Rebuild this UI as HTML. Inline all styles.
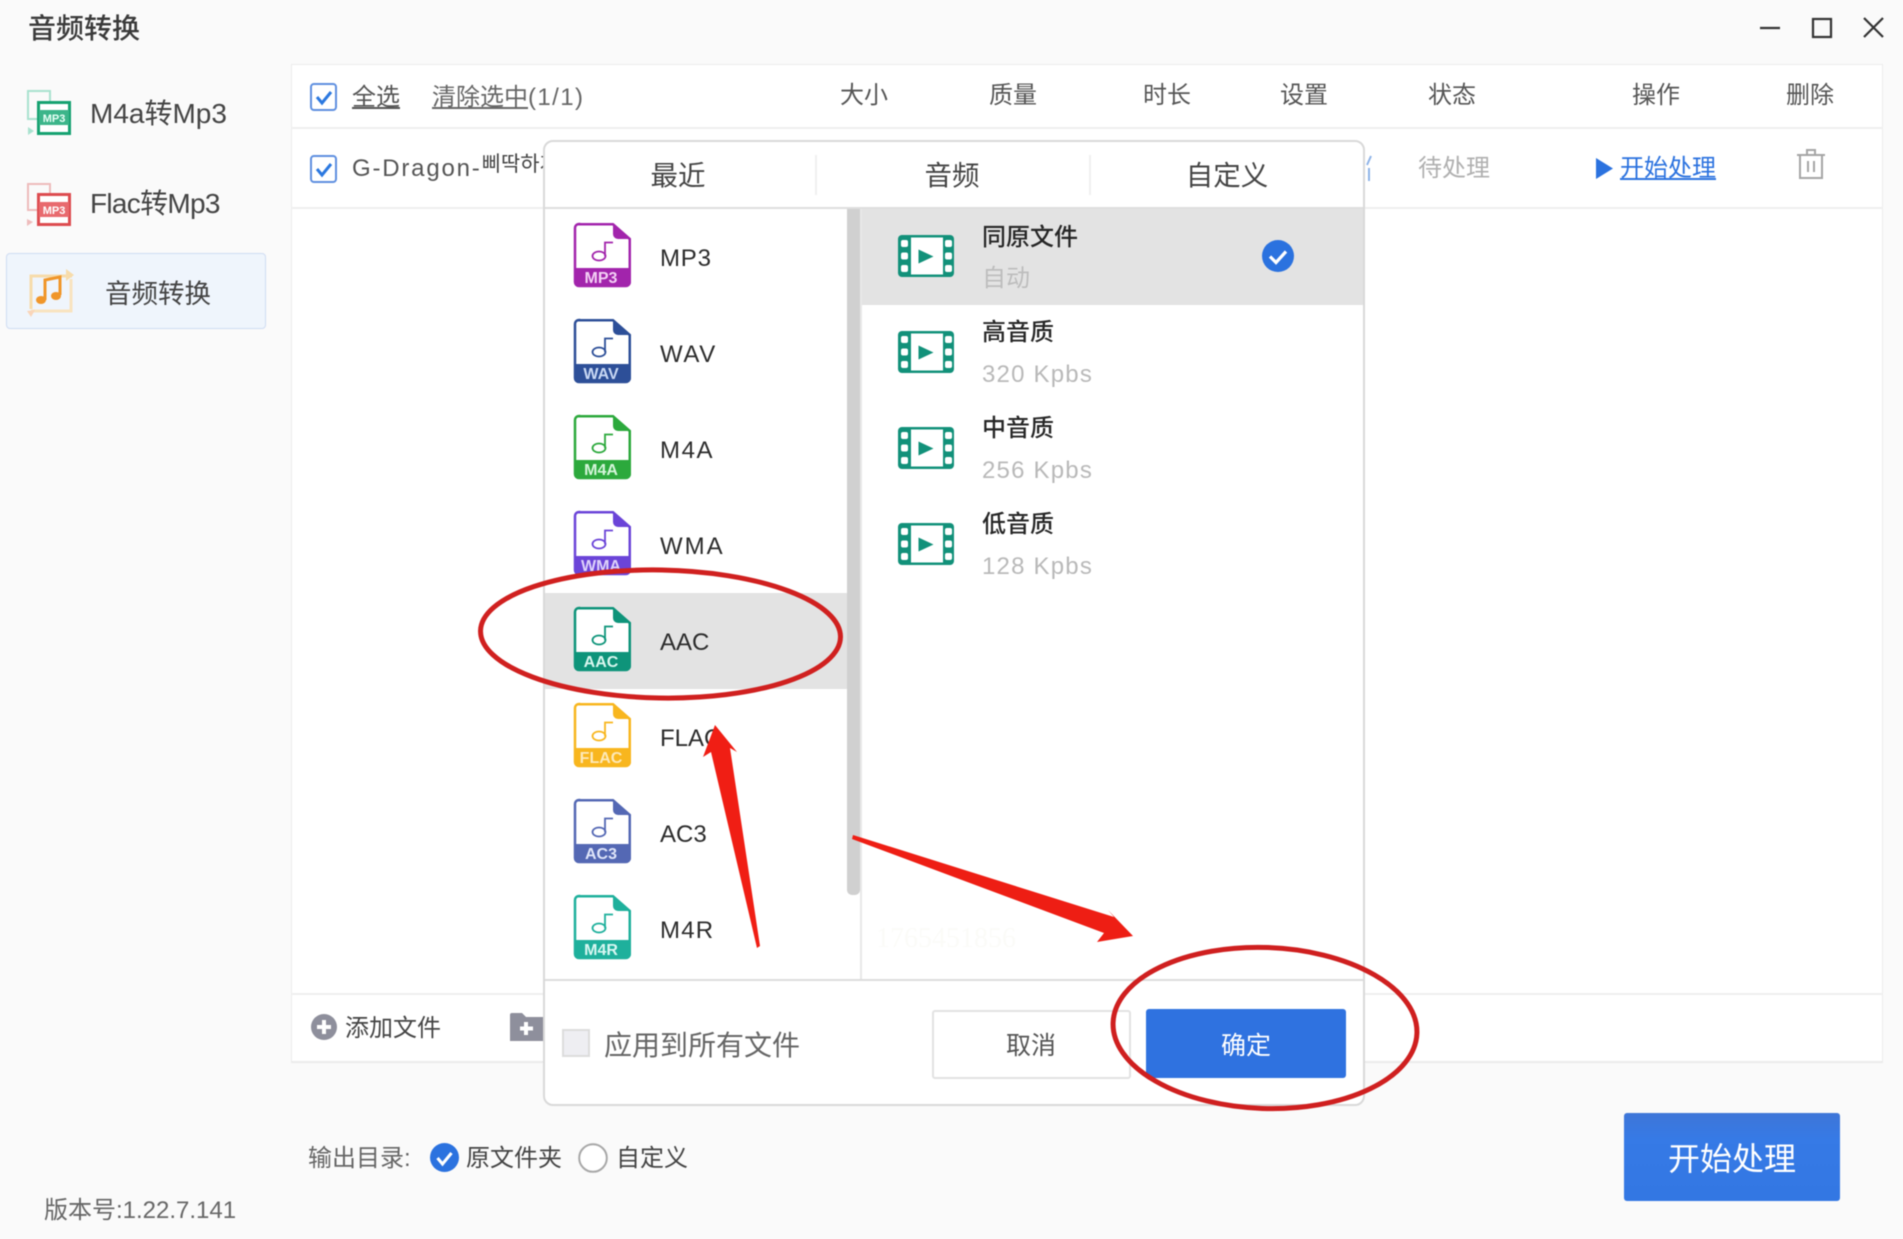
<!DOCTYPE html>
<html lang="zh">
<head>
<meta charset="utf-8">
<title>音频转换</title>
<style>
*{box-sizing:border-box;margin:0;padding:0}
html,body{width:1903px;height:1239px;overflow:hidden;background:#fafafa}
body{position:relative;font-family:"Liberation Sans","Noto Sans CJK SC",sans-serif;color:#444}
#root{position:absolute;left:0;top:0;width:1903px;height:1239px;filter:blur(.55px)}
.a{position:absolute}
.t{position:absolute;white-space:nowrap;line-height:1;font-size:24px}
.c{transform:translateX(-50%)}
svg{position:absolute;overflow:visible}
.fmt{font-size:24px;color:#2c2c2c}
.ttl{color:#262626;font-size:24px;font-weight:500}
.sub{color:#b9b9b9;font-size:24px;letter-spacing:1.200px}
.chk{position:absolute;width:27px;height:28px;border:2px solid #5e8fe0;border-radius:4px;background:#fff}
</style>
</head>
<body>
<div id="root">
<svg width="0" height="0" style="position:absolute">
<defs>
<symbol id="file" viewBox="0 0 57 64" overflow="visible">
<path d="M5 1.25H39L55.75 16V59a4 4 0 0 1-4 4H5a4 4 0 0 1-4-4V5a4 4 0 0 1 4-4z" fill="#fff" stroke="currentColor" stroke-width="2.5"/>
<path d="M39 0L57 16H44a5 5 0 0 1-5-5z" fill="currentColor"/>
<path d="M0 45H57V59a5 5 0 0 1-5 5H5a5 5 0 0 1-5-5z" fill="currentColor"/>
<ellipse cx="25" cy="33" rx="6.500" ry="4.500" fill="none" stroke="currentColor" stroke-width="1.800"/>
<path d="M31 33V19.500H39" fill="none" stroke="currentColor" stroke-width="1.800"/>
</symbol>
<symbol id="film" viewBox="0 0 56 42" overflow="visible">
<rect width="56" height="42" rx="4" fill="#12917a"/>
<rect x="13" y="2.500" width="32" height="37" fill="#fff"/>
<path d="M20.500 14.500L35.500 21.500L20.500 28.500z" fill="#12917a"/>
<g fill="#fff">
<rect x="3" y="5" width="7" height="7" rx="2"/><rect x="3" y="17.500" width="7" height="7" rx="2"/><rect x="3" y="30" width="7" height="7" rx="2"/>
<rect x="47" y="5" width="7" height="7" rx="2"/><rect x="47" y="17.500" width="7" height="7" rx="2"/><rect x="47" y="30" width="7" height="7" rx="2"/>
</g>
</symbol>
</defs>
</svg>

<!-- title bar -->
<div class="t" style="left:28px;top:15px;font-size:28px;font-weight:500;color:#3a3a3a">音频转换</div>
<svg style="left:1755px;top:12px" width="135" height="32" fill="none" stroke="#333" stroke-width="2.200">
<path d="M5 16H25"/>
<rect x="58" y="7" width="18" height="18"/>
<path d="M109 6L128 25M128 6L109 25"/>
</svg>

<!-- sidebar -->
<svg style="left:27px;top:90px" width="44" height="46">
<rect x="1" y="1" width="22" height="28" fill="none" stroke="#a9e2cf" stroke-width="2"/>
<path d="M1 37l6 4-6 4z" fill="#a9e2cf"/>
<rect x="11.500" y="12.500" width="31" height="31" fill="#fff" stroke="#16a271" stroke-width="3"/>
<rect x="12" y="20" width="30" height="15" fill="#3cb58a"/>
<text x="27" y="32" text-anchor="middle" font-size="11" font-weight="700" fill="#e8fff6" font-family="Liberation Sans">MP3</text>
</svg>
<div class="t" style="left:90px;top:100px;font-size:28px;color:#444">M4a转Mp3</div>
<svg style="left:27px;top:183px" width="44" height="44">
<rect x="1" y="1" width="22" height="26" fill="none" stroke="#eebcbc" stroke-width="2"/>
<path d="M0 36l6 3-6 4z" fill="#eebcbc"/>
<rect x="11.500" y="11.500" width="31" height="30" fill="#fff" stroke="#dd4c50" stroke-width="3"/>
<rect x="12" y="19" width="30" height="15" fill="#e86a6e"/>
<text x="27" y="31" text-anchor="middle" font-size="11" font-weight="700" fill="#fff" font-family="Liberation Sans">MP3</text>
</svg>
<div class="t" style="left:90px;top:190px;font-size:28px;letter-spacing:-.7px;color:#444">Flac转Mp3</div>
<div class="a" style="left:6px;top:253px;width:260px;height:76px;background:#eff5fc;border:1px solid #cfdcf2;border-radius:4px"></div>
<svg style="left:26px;top:267px" width="48" height="50" fill="none">
<path d="M46 9H5V42" stroke="#f7dcab" stroke-width="3"/>
<path d="M5 44H45V12" stroke="#f9e4bf" stroke-width="3"/>
<path d="M40 2l8 6-8 6z" fill="#f7dcab"/>
<path d="M5 50l-4-6 8-1z" fill="#f9d5b9"/>
<path d="M19 33V13L34 10V28" stroke="#f0962a" stroke-width="3"/>
<ellipse cx="15" cy="33" rx="5" ry="4" fill="#f0962a"/>
<ellipse cx="30" cy="29" rx="5" ry="4" fill="#f0962a"/>
</svg>
<div class="t" style="left:105px;top:281px;font-size:26.500px;color:#444">音频转换</div>

<!-- main panel -->
<div class="a" style="left:291px;top:64px;width:1592px;height:999px;background:#fff;border:1px solid #ececec;border-bottom:2px solid #ebebeb"></div>
<div class="a" style="left:291px;top:127px;width:1592px;height:2px;background:#efefef"></div>
<div class="a" style="left:291px;top:207px;width:1592px;height:2px;background:#efefef"></div>
<div class="a" style="left:291px;top:993px;width:1592px;height:2px;background:#efefef"></div>

<div class="chk" style="left:310px;top:83px"></div>
<svg style="left:310px;top:83px" width="27" height="28"><path d="M7 14l5 6 9-11" fill="none" stroke="#2b78e0" stroke-width="3"/></svg>
<div class="t" style="left:352px;top:86px;color:#555;text-decoration:underline">全选</div>
<div class="t" style="left:432px;top:86px;color:#666"><span style="text-decoration:underline">清除选中</span><span style="letter-spacing:1.400px">(1/1)</span></div>
<div class="t c" style="left:864px;top:84px;color:#555">大小</div>
<div class="t c" style="left:1013px;top:84px;color:#555">质量</div>
<div class="t c" style="left:1167px;top:84px;color:#555">时长</div>
<div class="t c" style="left:1304px;top:84px;color:#555">设置</div>
<div class="t c" style="left:1452px;top:84px;color:#555">状态</div>
<div class="t c" style="left:1656px;top:84px;color:#555">操作</div>
<div class="t c" style="left:1810px;top:84px;color:#555">删除</div>

<div class="chk" style="left:310px;top:155px"></div>
<svg style="left:310px;top:155px" width="27" height="28"><path d="M7 14l5 6 9-11" fill="none" stroke="#2b78e0" stroke-width="3"/></svg>
<div class="t" style="left:352px;top:157px;font-size:24px;letter-spacing:1.800px;color:#555;font-family:'Liberation Sans','Noto Sans CJK KR',sans-serif">G-Dragon-<span style="font-size:21px;letter-spacing:0;position:relative;top:-5px;color:#444">삐딱하게</span></div>
<svg style="left:1366px;top:155px" width="8" height="28" fill="none" stroke="#8fb4e8" stroke-width="2"><path d="M1 10L5 1M3 26V13"/></svg>
<div class="t c" style="left:1454px;top:157px;color:#b0b0b0">待处理</div>
<svg style="left:1596px;top:158px" width="17" height="21"><path d="M0 0L17 10.500L0 21z" fill="#2b72df"/></svg>
<div class="t" style="left:1620px;top:157px;color:#2b72df;text-decoration:underline">开始处理</div>
<svg style="left:1797px;top:149px" width="28" height="30" fill="none" stroke="#a5a5a5" stroke-width="2"><path d="M0 6H28M10 6V1H18V6M3 6V29H25V6M11 12V23M17 12V23"/></svg>

<!-- footer of panel -->
<svg style="left:311px;top:1014px" width="26" height="26"><circle cx="13" cy="13" r="13" fill="#8e8f9c"/><path d="M13 6V20M6 13H20" stroke="#fff" stroke-width="4"/></svg>
<div class="t" style="left:345px;top:1017px;color:#444">添加文件</div>
<svg style="left:510px;top:1013px" width="33" height="28"><path d="M0 2a2 2 0 0 1 2-2H12L16 4H33V28H0z" fill="#8e8f9c"/><path d="M16 9V22M10 15.500H23" stroke="#fff" stroke-width="4"/></svg>

<!-- bottom -->
<div class="t" style="left:308px;top:1147px;color:#666">输出目录:</div>
<svg style="left:430px;top:1143px" width="29" height="29"><circle cx="14.500" cy="14.500" r="14.500" fill="#2b72df"/><path d="M7.500 15l5 6 9-11" fill="none" stroke="#fff" stroke-width="3"/></svg>
<div class="t" style="left:466px;top:1147px;color:#444">原文件夹</div>
<svg style="left:578px;top:1143px" width="30" height="30"><circle cx="15" cy="15" r="13.800" fill="#fff" stroke="#a8a8a8" stroke-width="2"/></svg>
<div class="t" style="left:616px;top:1147px;color:#444">自定义</div>
<div class="t" style="left:44px;top:1199px;color:#666">版本号:1.22.7.141</div>
<div class="a" style="left:1624px;top:1113px;width:216px;height:88px;background:linear-gradient(#3e76d8,#367ae6 30%,#3377e3);border-radius:3px"></div>
<div class="t c" style="left:1732px;top:1143px;font-size:32px;color:#fff">开始处理</div>

<!-- modal -->
<div class="a" style="left:543px;top:140px;width:822px;height:966px;background:#fff;border:2px solid #d9d9d9;border-radius:10px;overflow:hidden">
  <div class="a" style="left:-2px;top:65px;width:824px;height:2px;background:#dedede"></div>
  <div class="a" style="left:270px;top:13px;width:2px;height:40px;background:#f0f0f0"></div>
  <div class="a" style="left:544px;top:13px;width:2px;height:40px;background:#f0f0f0"></div>
  <div class="a" style="left:-2px;top:451px;width:304px;height:96px;background:#e3e3e3"></div>
  <div class="a" style="left:316px;top:67px;width:504px;height:96px;background:#e3e3e3"></div>
  <div class="a" style="left:302px;top:67px;width:13px;height:686px;background:#d0d0d0;border-radius:0 0 5px 5px"></div>
  <div class="a" style="left:315px;top:67px;width:2px;height:772px;background:#e8e8e8"></div>
  <div class="a" style="left:-2px;top:837px;width:824px;height:2px;background:#dcdcdc"></div>
</div>
<div class="t c" style="left:678px;top:162px;font-size:27.500px;color:#444">最近</div>
<div class="t c" style="left:952px;top:162px;font-size:27.500px;color:#444">音频</div>
<div class="t c" style="left:1227px;top:162px;font-size:27.500px;color:#444">自定义</div>

<!-- format icons -->
<svg style="left:574px;top:223px;color:#a224ac" width="57" height="64" font-family="Liberation Sans" font-weight="700" font-size="16" text-anchor="middle"><use href="#file" width="57" height="64"/><text x="27" y="60" fill="#f3cff5">MP3</text></svg>
<div class="t fmt" style="left:660px;top:247px;letter-spacing:.8px">MP3</div>
<svg style="left:574px;top:319px;color:#2d4f98" width="57" height="64" font-family="Liberation Sans" font-weight="700" font-size="16" text-anchor="middle"><use href="#file" width="57" height="64"/><text x="27" y="60" fill="#c8d8f4">WAV</text></svg>
<div class="t fmt" style="left:660px;top:343px;letter-spacing:1.600px">WAV</div>
<svg style="left:574px;top:415px;color:#2ca93c" width="57" height="64" font-family="Liberation Sans" font-weight="700" font-size="16" text-anchor="middle"><use href="#file" width="57" height="64"/><text x="27" y="60" fill="#d5f5da">M4A</text></svg>
<div class="t fmt" style="left:660px;top:439px;letter-spacing:1.600px">M4A</div>
<svg style="left:574px;top:511px;color:#6b44d8" width="57" height="64" font-family="Liberation Sans" font-weight="700" font-size="16" text-anchor="middle"><use href="#file" width="57" height="64"/><text x="27" y="60" fill="#ddd2fa">WMA</text></svg>
<div class="t fmt" style="left:660px;top:535px;letter-spacing:2px">WMA</div>
<svg style="left:574px;top:607px;color:#0e947a" width="57" height="64" font-family="Liberation Sans" font-weight="700" font-size="16" text-anchor="middle"><use href="#file" width="57" height="64"/><text x="27" y="60" fill="#d9f7ef">AAC</text></svg>
<div class="t fmt" style="left:660px;top:631px">AAC</div>
<svg style="left:574px;top:703px;color:#f8b61e" width="57" height="64" font-family="Liberation Sans" font-weight="700" font-size="16" text-anchor="middle"><use href="#file" width="57" height="64"/><text x="27" y="60" fill="#fde9b8">FLAC</text></svg>
<div class="t fmt" style="left:660px;top:727px">FLAC</div>
<svg style="left:574px;top:799px;color:#5468b4" width="57" height="64" font-family="Liberation Sans" font-weight="700" font-size="16" text-anchor="middle"><use href="#file" width="57" height="64"/><text x="27" y="60" fill="#dfe5fa">AC3</text></svg>
<div class="t fmt" style="left:660px;top:823px">AC3</div>
<svg style="left:574px;top:895px;color:#1eb09c" width="57" height="64" font-family="Liberation Sans" font-weight="700" font-size="16" text-anchor="middle"><use href="#file" width="57" height="64"/><text x="27" y="60" fill="#d8f7f2">M4R</text></svg>
<div class="t fmt" style="left:660px;top:919px;letter-spacing:1.200px">M4R</div>

<!-- quality -->
<svg style="left:898px;top:235px" width="56" height="42"><use href="#film" width="56" height="42"/></svg>
<div class="t ttl" style="left:982px;top:226px">同原文件</div>
<div class="t" style="left:982px;top:267px;color:#bdbdbd">自动</div>
<svg style="left:1262px;top:240px" width="32" height="32"><circle cx="16" cy="16" r="16" fill="#2b72df"/><path d="M8 16.500l6 6 10-11" fill="none" stroke="#fff" stroke-width="3.200"/></svg>
<svg style="left:898px;top:331px" width="56" height="42"><use href="#film" width="56" height="42"/></svg>
<div class="t ttl" style="left:982px;top:321px">高音质</div>
<div class="t sub" style="left:982px;top:363px">320 Kpbs</div>
<svg style="left:898px;top:427px" width="56" height="42"><use href="#film" width="56" height="42"/></svg>
<div class="t ttl" style="left:982px;top:417px">中音质</div>
<div class="t sub" style="left:982px;top:459px">256 Kpbs</div>
<svg style="left:898px;top:523px" width="56" height="42"><use href="#film" width="56" height="42"/></svg>
<div class="t ttl" style="left:982px;top:513px">低音质</div>
<div class="t sub" style="left:982px;top:555px">128 Kpbs</div>

<div class="t" style="left:876px;top:925px;color:#fbfbf8;font-size:28px;font-family:'Liberation Serif',serif">1765451856</div>

<!-- modal footer -->
<div class="a" style="left:562px;top:1029px;width:28px;height:28px;background:#eeeef2;border:2px solid #dcdcdc"></div>
<div class="t" style="left:604px;top:1032px;font-size:28px;color:#666">应用到所有文件</div>
<div class="a" style="left:932px;top:1010px;width:199px;height:69px;background:#fff;border:2px solid #e2e2e2;border-radius:3px"></div>
<div class="t c" style="left:1031px;top:1034px;color:#555;font-size:25px">取消</div>
<div class="a" style="left:1146px;top:1009px;width:200px;height:69px;background:#2f72e0;border-radius:3px"></div>
<div class="t c" style="left:1246px;top:1034px;color:#fff;font-size:25px">确定</div>

<!-- annotations -->
<svg style="left:0;top:0" width="1903" height="1239" fill="none">
<ellipse cx="660.500" cy="634" rx="180" ry="64" stroke="#d0201f" stroke-width="5" transform="rotate(1 660.500 634)"/>
<ellipse cx="1265" cy="1028" rx="152" ry="80.500" stroke="#cf1f1f" stroke-width="5" transform="rotate(2 1265 1028)"/>
<polygon points="715,725 737,752 730,748 760,946 757,948 711,752 703,757" fill="#f01e14"/>
<polygon points="853,835 1114,917 1108,910 1133,936 1097,942 1104,933 852,839" fill="#ee1e14"/>
</svg>
</div>
</body>
</html>
